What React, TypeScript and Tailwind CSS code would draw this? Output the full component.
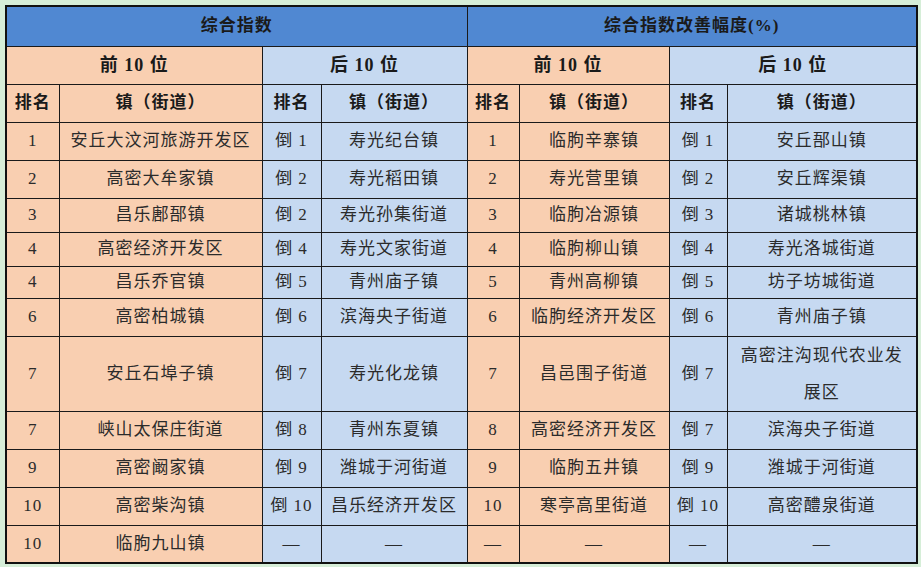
import React from 'react';

type Row = {
  a: string;
  an: string;
  b: string;
  bn: string;
  c: string;
  cn: string;
  d: string;
  dn: string;
  h: string;
  tall?: boolean;
};

const rows: Row[] = [
  { a: '1', an: '安丘大汶河旅游开发区', b: '倒 1', bn: '寿光纪台镇', c: '1', cn: '临朐辛寨镇', d: '倒 1', dn: '安丘郚山镇', h: 'h-[38px]' },
  { a: '2', an: '高密大牟家镇', b: '倒 2', bn: '寿光稻田镇', c: '2', cn: '寿光营里镇', d: '倒 2', dn: '安丘辉渠镇', h: 'h-[38px]' },
  { a: '3', an: '昌乐鄌郚镇', b: '倒 2', bn: '寿光孙集街道', c: '3', cn: '临朐冶源镇', d: '倒 3', dn: '诸城桃林镇', h: 'h-[34px]' },
  { a: '4', an: '高密经济开发区', b: '倒 4', bn: '寿光文家街道', c: '4', cn: '临朐柳山镇', d: '倒 4', dn: '寿光洛城街道', h: 'h-[34px]' },
  { a: '4', an: '昌乐乔官镇', b: '倒 5', bn: '青州庙子镇', c: '5', cn: '青州高柳镇', d: '倒 5', dn: '坊子坊城街道', h: 'h-[32px]' },
  { a: '6', an: '高密柏城镇', b: '倒 6', bn: '滨海央子街道', c: '6', cn: '临朐经济开发区', d: '倒 6', dn: '青州庙子镇', h: 'h-[38px]' },
  { a: '7', an: '安丘石埠子镇', b: '倒 7', bn: '寿光化龙镇', c: '7', cn: '昌邑围子街道', d: '倒 7', dn: '高密注沟现代农业发展区', h: 'h-[75px]', tall: true },
  { a: '7', an: '峡山太保庄街道', b: '倒 8', bn: '青州东夏镇', c: '8', cn: '高密经济开发区', d: '倒 7', dn: '滨海央子街道', h: 'h-[38px]' },
  { a: '9', an: '高密阚家镇', b: '倒 9', bn: '潍城于河街道', c: '9', cn: '临朐五井镇', d: '倒 9', dn: '潍城于河街道', h: 'h-[38px]' },
  { a: '10', an: '高密柴沟镇', b: '倒 10', bn: '昌乐经济开发区', c: '10', cn: '寒亭高里街道', d: '倒 10', dn: '高密醴泉街道', h: 'h-[38px]' },
  { a: '10', an: '临朐九山镇', b: '—', bn: '—', c: '—', cn: '—', d: '—', dn: '—', h: 'h-[38px]' },
];

const orange = 'bg-[#f9cfb1]';
const blue = 'bg-[#c6d9f1]';

export default function App() {
  const cell = 'border border-[#1a1a1a] text-center align-middle p-0';
  const body = 'text-[17px] leading-[22px] tracking-[1px] text-[#2b2b2b]';
  const head = 'text-[17px] leading-[22px] font-bold tracking-[1px] text-[#1a1a1a]';

  return (
    <div
      className="w-[921px] h-[567px] bg-[#d6eed8] pl-[5px] pt-[5px] overflow-hidden"
      style={{ fontFamily: '"Liberation Serif", "Noto Sans CJK SC", serif' }}
    >
      <table className="table-fixed border-collapse w-[911px] border-2 border-[#111]">
        <colgroup>
          <col className="w-[53px]" />
          <col className="w-[203px]" />
          <col className="w-[59px]" />
          <col className="w-[146px]" />
          <col className="w-[52px]" />
          <col className="w-[150px]" />
          <col className="w-[58px]" />
          <col className="w-[190px]" />
        </colgroup>
        <thead>
          <tr>
            <th colSpan={4} className={`${cell} ${head} h-[40px] bg-[#5088d2]`}>综合指数</th>
            <th colSpan={4} className={`${cell} ${head} h-[40px] bg-[#5088d2]`}>综合指数改善幅度(%)</th>
          </tr>
          <tr>
            <th colSpan={2} className={`${cell} ${head} text-[18px] h-[38px] ${orange}`}>前 10 位</th>
            <th colSpan={2} className={`${cell} ${head} text-[18px] h-[38px] ${blue}`}>后 10 位</th>
            <th colSpan={2} className={`${cell} ${head} text-[18px] h-[38px] ${orange}`}>前 10 位</th>
            <th colSpan={2} className={`${cell} ${head} text-[18px] h-[38px] ${blue}`}>后 10 位</th>
          </tr>
          <tr>
            <th className={`${cell} ${head} h-[38px] ${orange}`}>排名</th>
            <th className={`${cell} ${head} ${orange}`}>镇（街道）</th>
            <th className={`${cell} ${head} ${blue}`}>排名</th>
            <th className={`${cell} ${head} ${blue}`}>镇（街道）</th>
            <th className={`${cell} ${head} ${orange}`}>排名</th>
            <th className={`${cell} ${head} ${orange}`}>镇（街道）</th>
            <th className={`${cell} ${head} ${blue}`}>排名</th>
            <th className={`${cell} ${head} ${blue}`}>镇（街道）</th>
          </tr>
        </thead>
        <tbody>
          {rows.map((r, i) => (
            <tr key={i}>
              <td className={`${cell} ${body} ${r.h} ${orange}`}>{r.a}</td>
              <td className={`${cell} ${body} ${orange}`}>{r.an}</td>
              <td className={`${cell} ${body} ${blue}`}>{r.b}</td>
              <td className={`${cell} ${body} ${blue}`}>{r.bn}</td>
              <td className={`${cell} ${body} ${orange}`}>{r.c}</td>
              <td className={`${cell} ${body} ${orange}`}>{r.cn}</td>
              <td className={`${cell} ${body} ${blue}`}>{r.d}</td>
              <td className={`${cell} ${body} ${blue} px-[8px] ${r.tall ? 'leading-[37px]' : ''}`}>{r.dn}</td>
            </tr>
          ))}
        </tbody>
      </table>
    </div>
  );
}
